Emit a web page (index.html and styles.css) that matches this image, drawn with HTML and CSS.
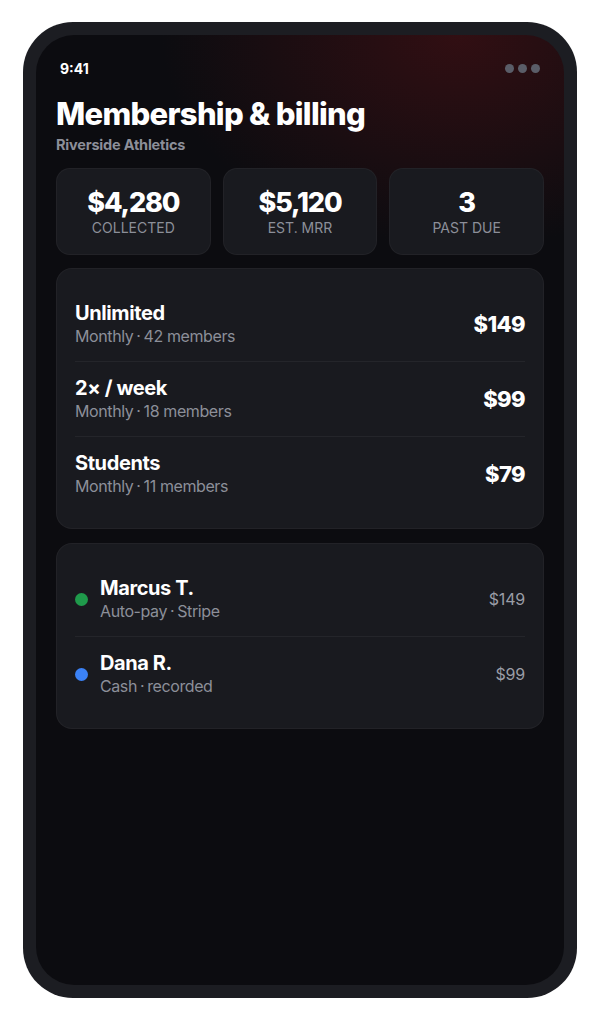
FILE: index.html
```html
<!DOCTYPE html>
<html lang="en">
<head>
  <meta charset="UTF-8">
  <meta name="viewport" content="width=device-width, initial-scale=1.0">
  <title>Membership &amp; billing</title>
  <link rel="stylesheet" href="styles.css">
</head>
<body>
<div class="phone">
  <div class="screen">
    <div class="status">
      <span class="time">9:41</span>
      <span class="dots"><i></i><i></i><i></i></span>
    </div>

    <h1>Membership &amp; billing</h1>
    <p class="gym">Riverside Athletics</p>

    <!-- Kennzahlen -->
    <div class="stats">
      <div class="stat">
        <strong>$4,280</strong>
        <span>Collected</span>
      </div>
      <div class="stat">
        <strong>$5,120</strong>
        <span>Est. MRR</span>
      </div>
      <div class="stat">
        <strong>3</strong>
        <span>Past due</span>
      </div>
    </div>

    <!-- Tarife -->
    <div class="card">
      <div class="row">
        <div>
          <div class="name">Unlimited</div>
          <div class="meta">Monthly<b>·</b>42 members</div>
        </div>
        <div class="price">$149</div>
      </div>
      <div class="row">
        <div>
          <div class="name">2× / week</div>
          <div class="meta">Monthly<b>·</b>18 members</div>
        </div>
        <div class="price">$99</div>
      </div>
      <div class="row">
        <div>
          <div class="name">Students</div>
          <div class="meta">Monthly<b>·</b>11 members</div>
        </div>
        <div class="price">$79</div>
      </div>
    </div>

    <!-- Letzte Zahlungen -->
    <div class="card">
      <div class="row">
        <div class="who">
          <span class="dot green"></span>
          <div>
            <div class="name">Marcus T.</div>
            <div class="meta">Auto-pay<b>·</b>Stripe</div>
          </div>
        </div>
        <div class="amount">$149</div>
      </div>
      <div class="row">
        <div class="who">
          <span class="dot blue"></span>
          <div>
            <div class="name">Dana R.</div>
            <div class="meta">Cash<b>·</b>recorded</div>
          </div>
        </div>
        <div class="amount">$99</div>
      </div>
    </div>
  </div>
</div>
</body>
</html>
```

FILE: styles.css
```css
body {
  margin: 0;
  padding: 0;
  background-color: #ffffff;
  font-family: Inter, "Noto Sans", sans-serif;
  color: #ffffff;
}
.phone {
  width: 554px;
  height: 976px;
  margin: 22px auto 0;
  padding: 13px;
  box-sizing: border-box;
  border-radius: 50px;
  background-color: #1c1d22;
}
.screen {
  height: 100%;
  box-sizing: border-box;
  padding: 24px 20px;
  border-radius: 38px;
  background:
    radial-gradient(ellipse 75% 30% at 80% 0%, rgba(95, 18, 22, 0.45), transparent 75%),
    #0c0c10;
  overflow: hidden;
}
.status {
  display: flex;
  justify-content: space-between;
  align-items: center;
  height: 18px;
  padding: 0 4px;
}
.time {
  font-size: 14px;
  font-weight: 700;
}
.dots {
  display: flex;
  gap: 4px;
}
.dots i {
  width: 9px;
  height: 9px;
  border-radius: 50%;
  background-color: #5a5d68;
}
h1 {
  margin: 18px 0 0;
  font-size: 31px;
  line-height: 38px;
  font-weight: 800;
  letter-spacing: -0.7px;
}
.gym {
  margin: 3px 0 0;
  font-size: 14.5px;
  line-height: 18px;
  font-weight: 700;
  color: #8c8f99;
  letter-spacing: -0.2px;
}
.stats {
  display: grid;
  grid-template-columns: repeat(3, 1fr);
  gap: 12px;
  margin-top: 14px;
}
.stat {
  display: flex;
  flex-direction: column;
  align-items: center;
  padding: 18px 0 17px;
  background-color: #191a1f;
  border: 1px solid rgba(255, 255, 255, 0.04);
  border-radius: 14px;
}
.stat strong {
  font-size: 27px;
  line-height: 32px;
  font-weight: 800;
  letter-spacing: -1.1px;
}
.stat span {
  font-size: 14px;
  line-height: 18px;
  text-transform: uppercase;
  color: #8c8f99;
}
.card {
  margin-top: 13px;
  padding: 18px 18px 17px;
  background-color: #191a1f;
  border: 1px solid rgba(255, 255, 255, 0.04);
  border-radius: 16px;
}
.card + .card {
  margin-top: 14px;
}
.row {
  display: flex;
  justify-content: space-between;
  align-items: center;
  padding: 14px 0;
  border-bottom: 1px solid rgba(255, 255, 255, 0.05);
}
.row:last-child {
  border-bottom: none;
}
.name {
  font-size: 20px;
  line-height: 24px;
  font-weight: 700;
  letter-spacing: -0.4px;
}
.meta {
  font-size: 16px;
  line-height: 22px;
  color: #8c8f99;
  letter-spacing: -0.4px;
}
.meta b {
  font-weight: 400;
  margin: 0 3px;
}
.price {
  font-size: 22px;
  font-weight: 800;
  letter-spacing: -0.6px;
}
.who {
  display: flex;
  align-items: center;
  gap: 12px;
}
.dot {
  width: 13px;
  height: 13px;
  border-radius: 50%;
}
.dot.green {
  background-color: #1f9a4b;
}
.dot.blue {
  background-color: #3b82f6;
}
.amount {
  font-size: 16px;
  color: #9a9da6;
  letter-spacing: -0.2px;
}
```
